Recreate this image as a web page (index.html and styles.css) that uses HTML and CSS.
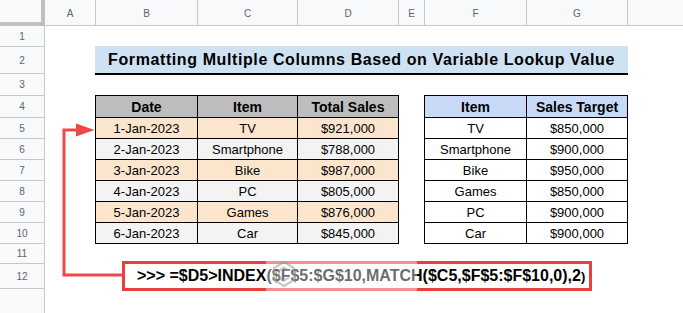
FILE: index.html
```html
<!DOCTYPE html>
<html>
<head>
<meta charset="utf-8">
<link rel="stylesheet" href="styles.css">
</head>
<body>
<div class="sheet">
  <div class="colheads">
    <div class="corner"></div>
    <div class="ch ca">A</div>
    <div class="ch cb">B</div>
    <div class="ch cc">C</div>
    <div class="ch cd">D</div>
    <div class="ch ce">E</div>
    <div class="ch cf">F</div>
    <div class="ch cg">G</div>
    <div class="ch chh"></div>
  </div>
  <div class="body">
    <div class="rowheads">
      <div class="rh r21">1</div>
      <div class="rh r27">2</div>
      <div class="rh r22">3</div>
      <div class="rh r22">4</div>
      <div class="rh r21">5</div>
      <div class="rh r21">6</div>
      <div class="rh r21">7</div>
      <div class="rh r21">8</div>
      <div class="rh r21">9</div>
      <div class="rh r21">10</div>
      <div class="rh r20">11</div>
      <div class="rh r25">12</div>
      <div class="rh rlast"></div>
    </div>
    <div class="canvas">
      <div class="title">Formatting Multiple Columns Based on Variable Lookup Value</div>

      <div class="tbl tbl-left">
        <div class="cell hd gray">Date</div><div class="cell hd gray">Item</div><div class="cell hd gray">Total Sales</div>
        <div class="cell peach">1-Jan-2023</div><div class="cell peach">TV</div><div class="cell peach">$921,000</div>
        <div class="cell light">2-Jan-2023</div><div class="cell light">Smartphone</div><div class="cell light">$788,000</div>
        <div class="cell peach">3-Jan-2023</div><div class="cell peach">Bike</div><div class="cell peach">$987,000</div>
        <div class="cell light">4-Jan-2023</div><div class="cell light">PC</div><div class="cell light">$805,000</div>
        <div class="cell peach">5-Jan-2023</div><div class="cell peach">Games</div><div class="cell peach">$876,000</div>
        <div class="cell light">6-Jan-2023</div><div class="cell light">Car</div><div class="cell light">$845,000</div>
      </div>

      <div class="tbl tbl-right">
        <div class="cell hd blue">Item</div><div class="cell hd blue">Sales Target</div>
        <div class="cell">TV</div><div class="cell">$850,000</div>
        <div class="cell">Smartphone</div><div class="cell">$900,000</div>
        <div class="cell">Bike</div><div class="cell">$950,000</div>
        <div class="cell">Games</div><div class="cell">$850,000</div>
        <div class="cell">PC</div><div class="cell">$900,000</div>
        <div class="cell">Car</div><div class="cell">$900,000</div>
      </div>

      <div class="formula">&gt;&gt;&gt; =$D5&gt;INDEX($F$5:$G$10,MATCH($C5,$F$5:$F$10,0),2<span class="small">)</span></div>

      <svg class="arrow" width="120" height="260" viewBox="0 0 120 260">
        <path d="M78 249 H19 V104 H36" fill="none" stroke="#f04848" stroke-width="3"/>
        <polygon points="31,97.5 49.5,104 31,110.5" fill="#f04848"/>
      </svg>

      <div class="watermark">
        <svg class="wm-logo" width="24" height="26" viewBox="0 0 24 26">
          <polygon points="12,1 22,7 22,19 12,25 2,19 2,7" fill="none" stroke="#9a9a9a" stroke-width="2.2"/>
          <polyline points="17,9.5 12,6.5 7,9.5 7,16.5 12,19.5 17,16.5" fill="none" stroke="#9a9a9a" stroke-width="2"/>
        </svg>
      </div>
    </div>
  </div>
</div>
</body>
</html>
```

FILE: styles.css
```css
html, body {
  margin: 0;
  padding: 0;
  background: #ffffff;
  overflow: hidden;
}

.sheet {
  width: 683px;
  height: 313px;
  display: flex;
  flex-direction: column;
  font-family: "Liberation Sans", Arial, sans-serif;
  color: #000;
}

.colheads {
  display: flex;
  height: 26px;
  flex: none;
}

.corner {
  width: 41px;
  height: 22px;
  background: #f8f9fa;
  border-right: 4px solid #c0c0c0;
  border-bottom: 4px solid #c0c0c0;
  flex: none;
}

.ch {
  box-sizing: border-box;
  height: 26px;
  background: #f8f9fa;
  border-right: 1px solid #c7c7c7;
  border-bottom: 1px solid #c7c7c7;
  display: flex;
  align-items: center;
  justify-content: center;
  font-size: 10px;
  color: #5f6368;
  flex: none;
  padding-top: 1px;
}
.ca { width: 51px; }
.cb { width: 102px; }
.cc { width: 100px; }
.cd { width: 101px; }
.ce { width: 26px; }
.cf { width: 102px; }
.cg { width: 101px; }
.chh { flex: 1; border-right: none; }

.body {
  flex: 1;
  display: flex;
  min-height: 0;
}

.rowheads {
  width: 45px;
  flex: none;
  display: flex;
  flex-direction: column;
  background: #f8f9fa;
  border-right: 1px solid #c7c7c7;
  box-sizing: border-box;
}

.rh {
  box-sizing: border-box;
  border-bottom: 1px solid #c7c7c7;
  display: flex;
  align-items: center;
  justify-content: center;
  font-size: 10px;
  color: #5f6368;
  flex: none;
}
.r20 { height: 20px; }
.r21 { height: 21px; }
.r22 { height: 22px; }
.r25 { height: 25px; }
.r27 { height: 27px; }
.rlast { flex: 1; border-bottom: none; }

.canvas {
  flex: 1;
  position: relative;
  display: grid;
  grid-template-columns: 51px 102px 100px 101px 26px 102px 101px 1fr;
  grid-template-rows: 21px 27px 22px 22px 21px 21px 21px 21px 21px 21px 20px 25px 1fr;
}

.title {
  grid-column: 2 / 8;
  grid-row: 2;
  margin-left: -1px;
  margin-top: -1px;
  height: 26px;
  background: #cfe2f3;
  border-bottom: 2px solid #000;
  display: flex;
  align-items: center;
  justify-content: center;
  font-weight: bold;
  font-size: 16px;
  letter-spacing: 0.6px;
  padding-top: 1px;
  box-sizing: content-box;
}

.tbl {
  grid-row: 4 / 11;
  margin-left: -1px;
  margin-top: -1px;
  align-self: start;
  justify-self: start;
  display: grid;
  grid-template-rows: 21px repeat(6, 20px);
  gap: 1px;
  padding: 1px;
  background: #000;
}
.tbl-left {
  grid-column: 2 / 5;
  grid-template-columns: 101px 99px 100px;
}
.tbl-right {
  grid-column: 6 / 8;
  grid-template-columns: 101px 100px;
}

.cell {
  background: #fff;
  display: flex;
  align-items: flex-end;
  justify-content: center;
  font-size: 13px;
  line-height: 15px;
  padding-bottom: 2px;
  box-sizing: border-box;
}
.cell.hd {
  font-weight: bold;
  font-size: 14px;
  padding-bottom: 2px;
}
.gray { background: #bdbdbd; }
.blue { background: #c9daf8; }
.peach { background: #fce5cd; }
.light { background: #f3f3f3; }

.formula {
  grid-column: 2 / 8;
  grid-row: 12;
  margin-top: -3px;
  margin-left: 26px;
  justify-self: start;
  width: 470px;
  height: 30px;
  box-sizing: border-box;
  border: 3px solid #e83e3e;
  padding-left: 12px;
  font-weight: bold;
  font-size: 16px;
  line-height: 24px;
  white-space: nowrap;
}
.formula .small { font-size: 13px; }

.arrow {
  position: absolute;
  left: 0;
  top: 0;
}

.watermark {
  position: absolute;
  left: 221px;
  top: 229px;
  width: 151px;
  height: 38px;
  background: rgba(255, 255, 255, 0.42);
  display: flex;
  align-items: center;
  padding-left: 6px;
  box-sizing: border-box;
}
.wm-logo { opacity: 0.55; }
```
